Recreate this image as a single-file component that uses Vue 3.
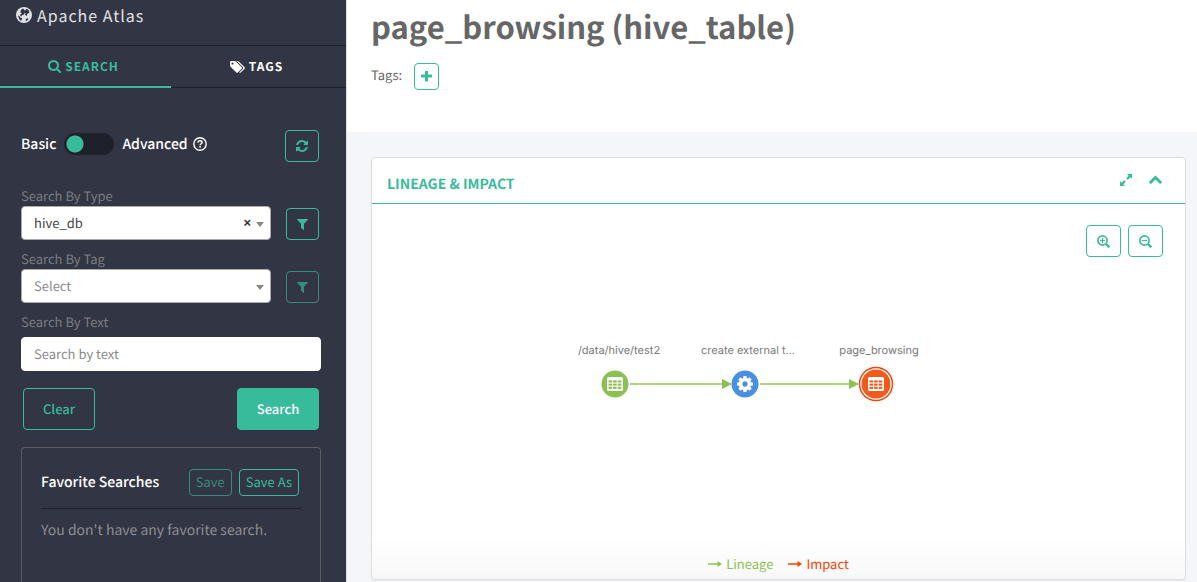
<script setup>
import { ref } from 'vue'

const type = ref('hive_db')
const tag = ref('')
const text = ref('')
const advanced = ref(false)

const icons = {
  search: 'M1216 832q0-185-131.500-316.500t-316.500-131.500-316.500 131.500-131.500 316.500 131.500 316.500 316.500 131.500 316.500-131.500 131.500-316.500zm512 832q0 52-38 90t-90 38q-54 0-90-38l-343-342q-179 124-399 124-143 0-273.500-55.500t-225-150-150-225-55.500-273.500 55.500-273.500 150-225 225-150 273.500-55.500 273.500 55.500 225 150 150 225 55.500 273.500q0 220-124 399l343 343q37 37 37 90z',
  tags: 'M576 448q0-53-37.500-90.500t-90.500-37.500-90.500 37.500-37.500 90.500 37.500 90.500 90.500 37.500 90.500-37.500 37.500-90.500zm1067 576q0 53-37 90l-491 492q-39 37-91 37-53 0-90-37l-715-716q-38-37-64.500-101t-26.500-117v-416q0-52 38-90t90-38h416q53 0 117 26.500t102 64.500l715 714q37 39 37 91zm384 0q0 53-37 90l-491 492q-39 37-91 37-36 0-59-14t-53-45l470-470q37-37 37-90 0-52-37-91l-715-714q-38-38-102-64.500t-117-26.500h224q53 0 117 26.500t102 64.500l715 714q37 39 37 91z',
  refresh: 'M1639 1056q0 5-1 7-64 268-268 434.500t-478 166.500q-146 0-282.500-55t-243.500-157l-129 129q-19 19-45 19t-45-19-19-45v-448q0-26 19-45t45-19h448q26 0 45 19t19 45-19 45l-137 137q71 66 161 102t187 36q134 0 250-65t186-179q11-17 53-117 8-23 30-23h192q13 0 22.500 9.500t9.500 22.500zm25-800v448q0 26-19 45t-45 19h-448q-26 0-45-19t-19-45 19-45l138-138q-148-137-349-137-134 0-250 65t-186 179q-11 17-53 117-8 23-30 23h-199q-13 0-22.500-9.500t-9.500-22.500v-7q65-268 270-434.500t480-166.500q146 0 284 55.500t245 156.500l130-129q19-19 45-19t45 19 19 45z',
  filter: 'M1595 295q17 41-14 70l-493 493v742q0 42-39 59-13 5-25 5-27 0-45-19l-256-256q-19-19-19-45v-486l-493-493q-31-29-14-70 17-39 59-39h1280q42 0 59 39z',
  plus: 'M1600 736v192q0 40-28 68t-68 28h-416v416q0 40-28 68t-68 28h-192q-40 0-68-28t-28-68v-416h-416q-40 0-68-28t-28-68v-192q0-40 28-68t68-28h416v-416q0-40 28-68t68-28h192q40 0 68 28t28 68v416h416q40 0 68 28t28 68z',
  chevron: 'M1683 1331l-166 165q-19 19-45 19t-45-19l-531-531-531 531q-19 19-45 19t-45-19l-166-165q-19-19-19-45.500t19-45.500l742-741q19-19 45-19t45 19l742 741q19 19 19 45.500t-19 45.500z',
  cog: 'M1152 896q0-106-75-181t-181-75-181 75-75 181 75 181 181 75 181-75 75-181zm512-109v222q0 12-8 23t-20 13l-185 28q-19 54-39 91 35 50 107 138 10 12 10 25t-9 23q-27 37-99 108t-94 71q-12 0-26-9l-138-108q-44 23-91 38-16 136-29 186-7 28-36 28h-222q-14 0-24.500-8.500t-11.500-21.500l-28-184q-49-16-90-37l-141 107q-10 9-25 9-14 0-25-11-126-114-165-168-7-10-7-23 0-12 8-23 15-21 51-66.500t54-70.500q-27-50-41-99l-183-27q-13-2-21-12.500t-8-23.500v-222q0-12 8-23t19-13l186-28q14-46 39-92-40-57-107-138-10-12-10-24 0-10 9-23 26-36 98.500-107.500t94.500-71.500q13 0 26 10l138 107q44-23 91-38 16-136 29-186 7-28 36-28h222q14 0 24.500 8.500t11.500 21.500l28 184q49 16 90 37l142-107q9-9 24-9 13 0 25 10 129 119 165 170 7 8 7 22 0 12-8 23-15 21-51 66.500t-54 70.500q26 50 41 98l183 28q13 2 21 12.500t8 23.500z',
}

const nodes = [
  { label: '/data/hive/test2', x: 243, labelX: 247, kind: 'table', color: '#8bc152' },
  { label: 'create external t...', x: 373, labelX: 376, kind: 'process', color: '#4a90e2' },
  { label: 'page_browsing', x: 504, labelX: 507, kind: 'table', color: '#f05a1c', current: true },
]
const edges = [
  { from: 258, to: 360 },
  { from: 388, to: 487 },
]
const cells = [0, 1, 2].flatMap((r) => [0, 1, 2].map((c) => ({ x: -6.5 + c * 4.6, y: -3.6 + r * 3.2 })))
</script>

<template>
  <div class="app">
    <aside class="sidebar">
      <header class="brand">
        <svg class="globe" viewBox="0 0 16 16" aria-hidden="true">
          <circle cx="8" cy="8" r="8" fill="#e0e1e3" />
          <path d="M5.200 2.600L7 1.700l1.300.4-.5 1 1.200.3 1.100-1.300 1.900.5 1.600 1.700-.9.500.8 1.200-1.500.2-1 1.300.2 1.300-1.400-.3-.9-1.200.8-1.300-1.300.2-.7 1.500-1.700.6-.6 1.300-1.200-.8.300-1.600 1.400-.4L4.300 5.200zM2 8.600l1.600.6 1 1.500 1.500.5-.3 1.700-.9.900-1.700-1.600zM9.700 12.200l1.900-.9 1 .5-1.300 1.600-1.500.6z" fill="#323544" />
        </svg>
        <span>Apache Atlas</span>
      </header>

      <nav class="tabs">
        <a href="#search" class="tab active">
          <svg class="ic13" viewBox="64 128 1664 1664" aria-hidden="true"><path :d="icons.search" /></svg>
          <span>SEARCH</span>
        </a>
        <a href="#tags" class="tab">
          <svg class="ic-tags" viewBox="128 128 1900 1536" aria-hidden="true"><path :d="icons.tags" /></svg>
          <span>TAGS</span>
        </a>
      </nav>

      <form class="panel" @submit.prevent>
        <div class="mode">
          <label for="mode">Basic</label>
          <input id="mode" v-model="advanced" class="switch" type="checkbox" role="switch" />
          <label for="mode">Advanced</label>
          <svg class="help" viewBox="0 0 14 14" aria-hidden="true">
            <circle cx="7" cy="7" r="6.200" fill="none" stroke="#fff" stroke-width="1.400" />
            <path d="M4.900 5.600C5 4.300 5.900 3.700 7 3.700c1.200 0 2.100.7 2.100 1.700C9.100 6.800 7.100 6.700 7.100 8.300" fill="none" stroke="#fff" stroke-width="1.500" />
            <rect x="6.300" y="9.100" width="1.600" height="1.600" fill="#fff" />
          </svg>
          <button type="button" class="btn sq refresh" aria-label="Refresh">
            <svg class="ic12" viewBox="128 128 1536 1536"><path :d="icons.refresh" /></svg>
          </button>
        </div>

        <label class="lbl" for="type">Search By Type</label>
        <div class="row">
          <div class="pick">
            <select id="type" v-model="type">
              <option value="hive_db">hive_db</option>
              <option value=""></option>
            </select>
            <button type="button" class="clear-x" aria-label="Clear type" @click="type = ''">×</button>
            <i class="caret"></i>
          </div>
          <button type="button" class="btn sq" aria-label="Filter by type">
            <svg class="ic11" viewBox="192 256 1408 1408"><path :d="icons.filter" /></svg>
          </button>
        </div>

        <label class="lbl" for="tag">Search By Tag</label>
        <div class="row">
          <div class="pick">
            <select id="tag" v-model="tag" class="empty">
              <option value="">Select</option>
            </select>
            <i class="caret"></i>
          </div>
          <button type="button" class="btn sq" aria-label="Filter by tag" disabled>
            <svg class="ic11" viewBox="192 256 1408 1408"><path :d="icons.filter" /></svg>
          </button>
        </div>

        <label class="lbl wide" for="text">Search By Text</label>
        <input id="text" v-model="text" class="text" type="text" placeholder="Search by text" />

        <div class="actions">
          <button type="button" class="btn clear">Clear</button>
          <button type="submit" class="btn primary">Search</button>
        </div>

        <section class="fav">
          <div class="fav-head">
            <h2>Favorite Searches</h2>
            <button type="button" class="btn small" disabled>Save</button>
            <button type="button" class="btn small">Save As</button>
          </div>
          <p>You don't have any favorite search.</p>
        </section>
      </form>
    </aside>

    <main class="main">
      <header class="title">
        <h1>page_browsing (hive_table)</h1>
        <div class="taglist">
          <span>Tags:</span>
          <button type="button" class="btn add" aria-label="Add tag">
            <svg class="ic11" viewBox="192 192 1408 1408"><path :d="icons.plus" /></svg>
          </button>
        </div>
      </header>

      <section class="card">
        <header class="card-head">
          <h3>LINEAGE &amp; IMPACT</h3>
          <button type="button" class="plain" aria-label="Expand">
            <svg class="ic12" viewBox="0 0 12 12">
              <path d="M7 0h5v5l-1.700-1.700-2.500 2.500-1.600-1.600 2.500-2.500zM0 7l1.700 1.700 2.500-2.500 1.600 1.600-2.500 2.500L5 12H0z" />
            </svg>
          </button>
          <button type="button" class="plain" aria-label="Collapse">
            <svg class="ic13" viewBox="90 160 1612 1612"><path :d="icons.chevron" /></svg>
          </button>
        </header>

        <div class="canvas">
          <svg class="graph" role="img" aria-label="Lineage graph">
            <g v-for="e in edges" :key="e.from" fill="#8bc152">
              <rect :x="e.from" y="179" :width="e.to - e.from - 8" height="2" opacity=".7" />
              <path :d="`M${e.to - 10} 175L${e.to} 180L${e.to - 10} 185z`" />
            </g>
            <g v-for="n in nodes" :key="n.label">
              <text :x="n.labelX" y="150" text-anchor="middle">{{ n.label }}</text>
              <g :transform="`translate(${n.x} 180)`">
                <circle v-if="n.current" r="16.500" fill="#fff" stroke="#f4430f" stroke-width="1.500" />
                <circle :r="n.current ? 14.500 : 13.500" :fill="n.color" />
                <template v-if="n.kind === 'table'">
                  <rect x="-8" y="-7" width="16" height="14" rx="1.500" fill="#fff" />
                  <rect v-for="(c, i) in cells" :key="i" :x="c.x" :y="c.y" width="3.600" height="2.100" :fill="n.color" />
                </template>
                <svg v-else x="-8" y="-8" width="16" height="16" viewBox="128 128 1536 1536">
                  <path :d="icons.cog" fill="#fff" />
                </svg>
              </g>
            </g>
          </svg>

          <div class="zoom">
            <button type="button" class="btn sq z" aria-label="Zoom in">
              <svg class="ic13 line" viewBox="0 0 13 13">
                <circle cx="5.500" cy="5.500" r="4.600" stroke-width="1.700" />
                <path d="M9 9l3.300 3.300" stroke-width="2.400" /><path d="M3 5.500h5M5.500 3v5" stroke-width="1.200" />
              </svg>
            </button>
            <button type="button" class="btn sq z" aria-label="Zoom out">
              <svg class="ic13 line" viewBox="0 0 13 13">
                <circle cx="5.500" cy="5.500" r="4.600" stroke-width="1.700" />
                <path d="M9 9l3.300 3.300" stroke-width="2.400" /><path d="M3 5.500h5" stroke-width="1.200" />
              </svg>
            </button>
          </div>

          <div class="legend">
            <span class="lineage">
              <svg class="arrow" viewBox="0 0 14 8"><path d="M0 3.200h9.500V1L14 4 9.500 7V4.800H0z" /></svg>Lineage
            </span>
            <span class="impact">
              <svg class="arrow" viewBox="0 0 14 8"><path d="M0 3.200h9.500V1L14 4 9.500 7V4.800H0z" /></svg>Impact
            </span>
          </div>
        </div>
      </section>
    </main>
  </div>
</template>

<style>
body {
  margin: 0;
}
</style>

<style scoped>
.app {
  --green: #38bb9b;
  display: flex;
  height: 100vh;
  overflow: hidden;
  font-family: "Noto Sans CJK SC", "Noto Sans", sans-serif;
  font-size: 13px;
  line-height: 20px;
  color: #666;
  text-rendering: geometricPrecision;
}
.app * {
  box-sizing: border-box;
}
button,
input,
select {
  font: inherit;
  text-rendering: inherit;
}
svg {
  display: block;
  flex: none;
  fill: currentColor;
}
.line {
  fill: none;
  stroke: currentColor;
}
h1,
h2,
h3,
p {
  margin: 0;
}
.ic11 { width: 11px; height: 11px; }
.ic12 { width: 12px; height: 12px; }
.ic13 { width: 13px; height: 13px; }
.ic-tags { width: 15px; height: 12px; }

.sidebar {
  display: flex;
  flex: 0 0 346px;
  flex-direction: column;
  background: #323544;
}
.brand {
  display: flex;
  align-items: center;
  gap: 5px;
  height: 46px;
  padding: 0 16px 16px;
  border-bottom: 1px solid #1f212d;
  font-size: 16px;
  letter-spacing: 1px;
  color: #e0e1e3;
}
.globe { width: 16px; height: 16px; }
.tabs {
  display: grid;
  grid-template-columns: 171px 1fr;
}
.tab {
  display: flex;
  align-items: center;
  justify-content: center;
  gap: 4px;
  height: 42px;
  padding-right: 4px;
  border-bottom: 1px solid #1f212d;
  font-size: 12px;
  font-weight: 700;
  letter-spacing: 1px;
  color: #fff;
  text-decoration: none;
}
.tab.active {
  padding-top: 1px;
  border-bottom: 2px solid var(--green);
  color: var(--green);
}
.panel {
  display: flex;
  flex: 1;
  flex-direction: column;
  min-height: 0;
  padding: 42px 25px 0 21px;
}
.mode {
  display: flex;
  align-items: center;
  height: 32px;
  margin-bottom: 24px;
  padding: 0 2px 4px 0;
  font-size: 14px;
  font-weight: 500;
  color: #fff;
}
.switch {
  appearance: none;
  width: 50px;
  height: 22px;
  margin: 0 8px;
  border-radius: 11px;
  background: radial-gradient(circle at 11px 11px, var(--green) 8px, transparent 9px) #1e202b;
}
.help {
  width: 14px;
  height: 14px;
  margin-left: 5px;
}
.refresh {
  align-self: flex-start;
  margin-left: auto;
}
.lbl {
  height: 20px;
  color: #7c7d80;
}
.lbl.wide { margin-bottom: 5px; }
.row {
  display: flex;
  align-items: flex-end;
  justify-content: space-between;
  margin-bottom: 9px;
  padding-right: 2px;
}
.pick {
  position: relative;
  width: 250px;
}
select,
.text {
  display: block;
  width: 100%;
  height: 34px;
  padding: 0 12px;
  border: 1px solid #aaa;
  border-radius: 4px;
  background: #fff;
  color: #444;
  appearance: none;
}
select.empty { color: #8a8a8a; }
.text {
  flex: none;
  padding-bottom: 2px;
  border-color: #fff;
}
.text::placeholder { color: #8a8a8a; opacity: 1; }
.clear-x {
  position: absolute;
  top: 7px;
  right: 20px;
  padding: 0;
  border: 0;
  background: none;
  font-family: "Liberation Sans", Arial, sans-serif;
  font-weight: 700;
  color: #333;
}
.caret {
  position: absolute;
  top: 16px;
  right: 7px;
  border: 4px solid transparent;
  border-top: 5px solid #888;
  border-bottom: 0;
}
.btn {
  display: flex;
  align-items: center;
  justify-content: center;
  padding: 0;
  border: 1px solid var(--green);
  border-radius: 4px;
  background: transparent;
  color: var(--green);
}
.btn:disabled { opacity: .65; }
.sq {
  width: 33px;
  height: 32px;
}
.sq.refresh { width: 34px; }
.actions {
  display: flex;
  justify-content: space-between;
  margin: 17px 2px;
}
.clear,
.primary {
  width: 72px;
  height: 42px;
  font-weight: 500;
}
.primary {
  width: 82px;
  background: var(--green);
  color: #fff;
}
.fav {
  flex: 1;
  padding: 21px 19px 0;
  border: 1px solid #5e5e5e;
  border-bottom: 0;
  border-radius: 4px 4px 0 0;
}
.fav-head {
  display: flex;
  align-items: center;
  gap: 7px;
  padding: 0 2px 12px 0;
  border-bottom: 1px solid #1f212d;
}
.fav h2 {
  margin-right: auto;
  padding-bottom: 2px;
  font-size: 14px;
  font-weight: 500;
  color: #fff;
}
.fav p {
  margin-top: 11px;
  font-size: 14px;
  color: #8d8e91;
}
.small {
  height: 27px;
  padding: 0 6px 2px;
}

.main {
  display: flex;
  flex: 1;
  flex-direction: column;
  min-width: 0;
  border-left: 1px solid #dfe0e4;
  background: #f5f6fa;
}
.title {
  height: 132px;
  padding: 4px 24px 0;
  background: #fff;
}
h1 {
  font-size: 31px;
  font-weight: 700;
  line-height: 44px;
}
.taglist {
  display: flex;
  align-items: center;
  gap: 12px;
  margin-top: 15px;
}
.taglist span { padding-bottom: 4px; }
.add {
  width: 25px;
  height: 27px;
}
.card {
  display: flex;
  flex: 1;
  flex-direction: column;
  margin: 25px 11px 2px 24px;
  border: 1px solid #dedede;
  border-radius: 4px;
  background: linear-gradient(#fff 90%, #f8f8f8);
  box-shadow: 0 1px 1px rgba(0, 0, 0, .06);
}
.card-head {
  display: flex;
  align-items: center;
  gap: 17px;
  height: 46px;
  padding: 6px 23px 0 15px;
  border-bottom: 1px solid var(--green);
}
h3 {
  margin-right: auto;
  font-size: 14px;
  font-weight: 700;
  color: var(--green);
}
.plain {
  margin-top: -8px;
  padding: 0;
  border: 0;
  background: none;
  color: var(--green);
}
.canvas {
  position: relative;
  display: flex;
  flex: 1;
  flex-direction: column;
  justify-content: space-between;
}
.graph {
  position: absolute;
  inset: 0;
  width: 100%;
  height: 100%;
}
.graph text {
  font-family: Inter, "Liberation Sans", Arial, sans-serif;
  font-size: 11px;
  fill: #777;
}
.zoom {
  position: relative;
  display: flex;
  justify-content: flex-end;
  gap: 7px;
  padding: 21px 22px 0;
}
.z { width: 35px; }
.legend {
  position: relative;
  display: flex;
  justify-content: center;
  gap: 15px;
  padding-bottom: 5px;
}
.legend span {
  display: flex;
  align-items: center;
  gap: 4px;
}
.arrow { width: 14px; height: 8px; }
.lineage { color: #8bc152; }
.impact { color: #fb4200; }
</style>
